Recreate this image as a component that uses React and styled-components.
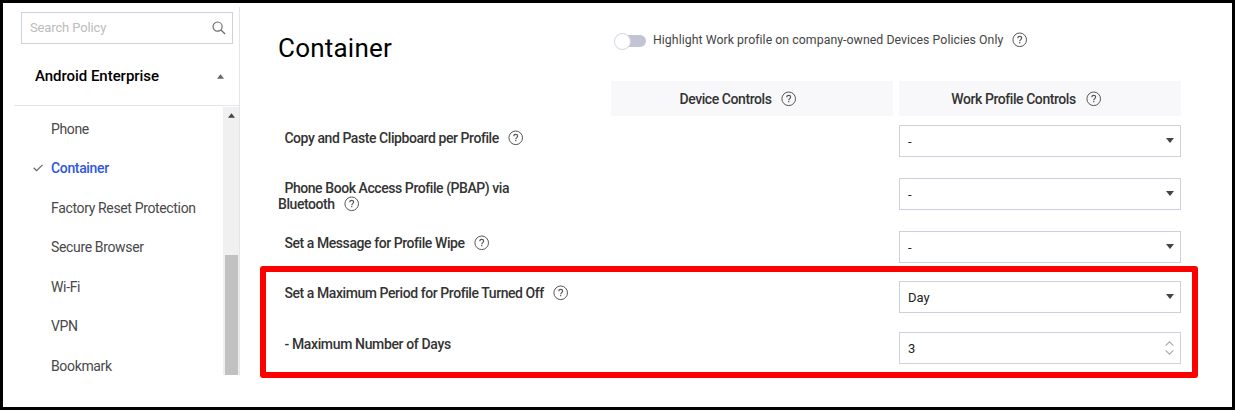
import React from "react";
import styled, { createGlobalStyle } from "styled-components";

const GlobalStyle = createGlobalStyle`
  * { box-sizing: border-box; }
  body { margin: 0; background: #fff; font-family: Roboto, "Liberation Sans", sans-serif; }
`;

const Frame = styled.div`
  position: relative;
  display: flex;
  width: 1235px;
  height: 410px;
  border: 3px solid #000;
  background: #fff;
  overflow: hidden;
`;

const Sidebar = styled.aside`
  width: 226px;
  height: 368px;
  margin: 4px 0 0 11px;
  border-right: 1px solid #e4e4ec;
  display: flex;
  flex-direction: column;
`;

const SearchBox = styled.div`
  display: flex;
  align-items: center;
  justify-content: space-between;
  flex: none;
  width: 212px;
  height: 32px;
  margin: 5px 0 0 7px;
  padding: 0 6px 0 8px;
  border: 1px solid #cfd0df;
`;

const Placeholder = styled.span`
  font-size: 13px;
  line-height: 16px;
  letter-spacing: -0.13px;
  color: #bcbcbc;
`;

const GroupHeader = styled.div`
  display: flex;
  align-items: center;
  justify-content: space-between;
  flex: none;
  height: 62px;
  padding: 3px 15px 0 21px;
  border-bottom: 1px solid #e4e4ec;
`;

const GroupTitle = styled.span`
  font-size: 15px;
  font-weight: 500;
  line-height: 18px;
  letter-spacing: -0.04px;
  color: #000;
`;

const ListArea = styled.div`
  display: flex;
  flex: 1;
  min-height: 0;
  padding-top: 1px;
`;

const PolicyList = styled.ul`
  flex: 1;
  list-style: none;
  margin: 0;
  padding: 2.3px 0 0 19px;
  overflow: hidden;
`;

const PolicyItem = styled.li`
  display: flex;
  align-items: center;
  height: 39.45px;
  font-size: 14px;
  line-height: 18px;
  letter-spacing: -0.35px;
  white-space: nowrap;
  font-weight: ${(p) => (p.$active ? 500 : 400)};
  color: ${(p) => (p.$active ? "#3056e0" : "#484848")};
`;

const CheckSlot = styled.span`
  display: flex;
  width: 18px;
`;

const Scrollbar = styled.div`
  display: flex;
  flex-direction: column;
  align-items: center;
  justify-content: space-between;
  width: 16px;
  padding-top: 6px;
  background: #f0f0f1;
`;

const Thumb = styled.div`
  width: 13px;
  height: 120px;
  background: #c1c1c1;
`;

const Main = styled.main`
  width: 904px;
  margin-left: 38px;
`;

const TopBar = styled.div`
  display: flex;
  height: 78px;
`;

const Title = styled.h1`
  width: 335px;
  margin: 0;
  padding-top: 29px;
  font-size: 26px;
  font-weight: 400;
  line-height: 32px;
  letter-spacing: 0.22px;
  color: #000;
`;

const HighlightOption = styled.div`
  display: flex;
  align-items: center;
  height: 18px;
  margin-top: 28px;
  font-size: 12.3px;
  line-height: 16px;
  color: #444;
`;

const ToggleTrack = styled.span`
  display: flex;
  align-items: center;
  width: 32px;
  height: 12px;
  margin: 2px 7px 0 1px;
  border-radius: 6px;
  background: linear-gradient(90deg, transparent 8px, #c3c4d3 8px);
`;

const ToggleKnob = styled.span`
  width: 17px;
  height: 17px;
  border: 1px solid #d2d3e0;
  border-radius: 50%;
  background: #fff;
`;

const OptionText = styled.span`
  letter-spacing: 0.05px;
  margin: 0 9px 0 0;
  white-space: nowrap;
`;

const ColumnHeads = styled.div`
  display: grid;
  grid-template-columns: 282px 282px;
  column-gap: 6px;
  justify-content: end;
  height: 35px;
  margin: 0 1px 9px 0;
`;

const ColumnHead = styled.div`
  display: flex;
  align-items: center;
  justify-content: center;
  gap: 10px;
  background: #f8f8fb;
  padding-right: 27px;
  font-size: 14px;
  font-weight: 500;
  line-height: 18px;
  letter-spacing: -0.43px;
  color: #333;
`;

const SettingRow = styled.div`
  display: flex;
  justify-content: space-between;
  align-items: flex-start;
  height: ${(p) => p.$height};
  padding-right: 1px;
`;

const SettingLabel = styled.div`
  width: 260px;
  padding-top: ${(p) => p.$top || "4px"};
  text-indent: 6.4px;
  font-size: 14px;
  font-weight: 500;
  line-height: 16px;
  letter-spacing: ${(p) => p.$spacing || "-0.43px"};
  color: #333;
  white-space: nowrap;

  svg { margin-left: 9px; vertical-align: -3px; }
`;

const Field = styled.div`
  display: flex;
  align-items: center;
  justify-content: space-between;
  width: 282px;
  height: 32px;
  padding: 2px 6px 0 8px;
  border: 1px solid #cfd0df;
  font-size: 13px;
  line-height: 16px;
  color: #222;

  svg { margin-top: -3px; }
`;

const RedOutline = styled.div`
  position: absolute;
  left: 257px;
  top: 263px;
  width: 938px;
  height: 112px;
  border: 6px solid #fe0000;
  border-radius: 3px;
`;

const HelpIcon = () => (
  <svg width="16" height="16" viewBox="0 0 16 16" fill="none" stroke="#555">
    <circle cx="7.7" cy="7.8" r="6.8" />
    <path d="M5.8 6.3c0-1.2.8-1.9 1.95-1.9 1.1 0 1.9.65 1.9 1.65 0 .8-.4 1.2-1 1.65-.65.45-.9.75-.9 1.45" strokeWidth="1.15" />
    <path d="M7.75 10.1v1.2" strokeWidth="1.2" />
  </svg>
);

const SearchIcon = () => (
  <svg width="14" height="14" viewBox="0 0 15 15" fill="none" stroke="#666" strokeWidth="1.2">
    <circle cx="6" cy="6" r="4.9" />
    <path d="M9.5 9.5 14 14" strokeWidth="1.4" />
  </svg>
);

const Triangle = ({ up, size = 8, color = "#444" }) => (
  <svg width={size} height="5" viewBox="0 0 8 5" fill={color}>
    <path d={up ? "M0 5 4 0 8 5Z" : "M0 0h8L4 5Z"} />
  </svg>
);

const CheckIcon = () => (
  <svg width="10" height="8" viewBox="0 0 10 8" fill="none" stroke="#666" strokeWidth="1.3">
    <path d="M.6 3.7 3.6 6.7 9.5.9" />
  </svg>
);

const Stepper = () => (
  <svg width="9" height="14" viewBox="0 0 9 14" fill="none" stroke="#aaa" strokeWidth="1.1">
    <path d="M.6 4.6 4.5.8l3.9 3.8M.6 9.4l3.9 3.8 3.9-3.8" />
  </svg>
);

const policies = [
  { name: "Phone" },
  { name: "Container", active: true },
  { name: "Factory Reset Protection" },
  { name: "Secure Browser" },
  { name: "Wi-Fi" },
  { name: "VPN" },
  { name: "Bookmark" },
];

const settings = [
  { label: "Copy and Paste Clipboard per Profile", value: "-", top: "5px", height: "53px", help: true },
  { label: <>Phone Book Access Profile (PBAP) via<br />Bluetooth</>, value: "-", top: "2px", height: "52.5px", help: true },
  { label: "Set a Message for Profile Wipe", value: "-", height: "50.5px", help: true },
  { label: "Set a Maximum Period for Profile Turned Off", value: "Day", height: "51px", help: true },
  { label: "- Maximum Number of Days", value: "3", height: "32px", number: true, spacing: "-0.36px" },
];

export default function App() {
  return (
    <>
      <GlobalStyle />
      <Frame>
        <Sidebar>
          <SearchBox>
            <Placeholder>Search Policy</Placeholder>
            <SearchIcon />
          </SearchBox>
          <GroupHeader>
            <GroupTitle>Android Enterprise</GroupTitle>
            <Triangle up size={7} color="#666" />
          </GroupHeader>
          <ListArea>
            <PolicyList>
              {policies.map((p) => (
                <PolicyItem key={p.name} $active={p.active}>
                  <CheckSlot>{p.active && <CheckIcon />}</CheckSlot>
                  {p.name}
                </PolicyItem>
              ))}
            </PolicyList>
            <Scrollbar>
              <Triangle up size={7} />
              <Thumb />
            </Scrollbar>
          </ListArea>
        </Sidebar>
        <Main>
          <TopBar>
            <Title>Container</Title>
            <HighlightOption>
              <ToggleTrack><ToggleKnob /></ToggleTrack>
              <OptionText>Highlight Work profile on company-owned Devices Policies Only</OptionText>
              <HelpIcon />
            </HighlightOption>
          </TopBar>
          <ColumnHeads>
            <ColumnHead>Device Controls<HelpIcon /></ColumnHead>
            <ColumnHead>Work Profile Controls<HelpIcon /></ColumnHead>
          </ColumnHeads>
          {settings.map((s, i) => (
            <SettingRow key={i} $height={s.height}>
              <SettingLabel $top={s.top} $spacing={s.spacing}>{s.label}{s.help && <HelpIcon />}</SettingLabel>
              <Field>
                {s.value}
                {s.number ? <Stepper /> : <Triangle />}
              </Field>
            </SettingRow>
          ))}
        </Main>
        <RedOutline />
      </Frame>
    </>
  );
}
